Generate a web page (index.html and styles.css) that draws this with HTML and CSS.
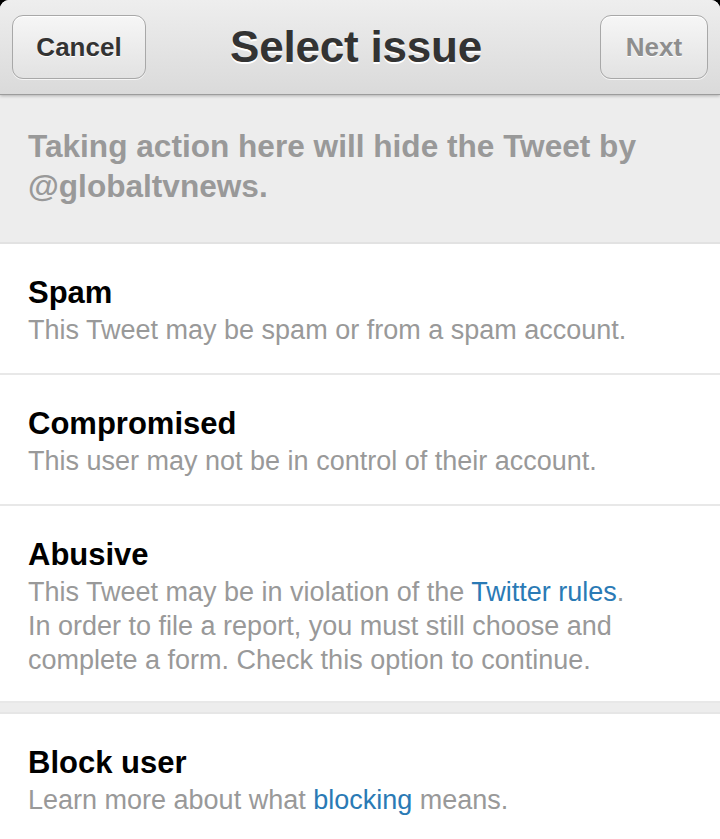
FILE: index.html
```html
<!DOCTYPE html>
<html>
<head>
<meta charset="utf-8">
<link rel="stylesheet" href="styles.css">
</head>
<body>
<div class="screen">
  <header class="navbar">
    <div class="nav-left"><button class="btn btn-cancel">Cancel</button></div>
    <h1 class="nav-title">Select issue</h1>
    <div class="nav-right"><button class="btn btn-next">Next</button></div>
  </header>
  <div class="notice">Taking action here will hide the Tweet by @globaltvnews.</div>
  <ul class="options">
    <li class="option">
      <div class="opt-title">Spam</div>
      <div class="opt-desc">This Tweet may be spam or from a spam account.</div>
    </li>
    <li class="option">
      <div class="opt-title">Compromised</div>
      <div class="opt-desc">This user may not be in control of their account.</div>
    </li>
    <li class="option option-tall">
      <div class="opt-title">Abusive</div>
      <div class="opt-desc">This Tweet may be in violation of the <a class="link">Twitter rules</a>.<br>In order to file a report, you must still choose and<br>complete a form. Check this option to continue.</div>
    </li>
  </ul>
  <div class="gap"></div>
  <ul class="options">
    <li class="option">
      <div class="opt-title">Block user</div>
      <div class="opt-desc">Learn more about what <a class="link">blocking</a> means.</div>
    </li>
  </ul>
</div>
</body>
</html>
```

FILE: styles.css
```css
html, body {
  margin: 0;
  padding: 0;
  background: #000;
}
body {
  font-family: "Liberation Sans", Arial, sans-serif;
  width: 720px;
  height: 839px;
  overflow: hidden;
}
.screen {
  background: #fff;
  height: 839px;
  border-radius: 9px 9px 0 0;
  overflow: hidden;
}
.navbar {
  display: grid;
  grid-template-columns: 1fr auto 1fr;
  align-items: center;
  height: 95px;
  box-sizing: border-box;
  padding: 0 12px;
  background: linear-gradient(#eeeeee, #dadada);
  border-bottom: 1px solid #9c9c9c;
  box-shadow: 0 1px 3px rgba(0,0,0,0.25);
  position: relative;
  z-index: 1;
}
.nav-left { display: flex; justify-content: flex-start; }
.nav-right { display: flex; justify-content: flex-end; }
.nav-title {
  margin: 0 0 0 -8px;
  font-size: 44px;
  font-weight: bold;
  color: #333;
  text-shadow: 0 2px 0 #fff;
  letter-spacing: -0.2px;
}
.btn {
  font-family: "Liberation Sans", Arial, sans-serif;
  font-weight: bold;
  font-size: 26px;
  height: 64px;
  border: 1px solid #a8a8a8;
  border-radius: 11px;
  background: linear-gradient(#f6f6f6, #e2e2e2);
  box-shadow: inset 0 1px 0 #fff, 0 1px 0 rgba(255,255,255,0.7);
  text-shadow: 0 1px 0 #fff;
  padding: 0;
  margin-top: 0;
}
.btn-cancel {
  width: 134px;
  color: #333;
}
.btn-next {
  width: 108px;
  color: #8e8e8e;
}
.notice {
  background: #ededed;
  color: #999;
  font-weight: bold;
  font-size: 31.6px;
  line-height: 40px;
  padding: 31px 60px 36px 28px;
  border-bottom: 2px solid #e2e2e2;
}
.options {
  list-style: none;
  margin: 0;
  padding: 0;
}
.option {
  padding: 31px 28px 26px;
  border-bottom: 2px solid #e8e8e8;
}
.option-tall {
  padding-bottom: 24px;
}
.options:last-child .option:last-child {
  border-bottom: none;
}
.opt-title {
  font-size: 31px;
  font-weight: bold;
  line-height: 36px;
  color: #000;
}
.opt-desc {
  margin-top: 2px;
  font-size: 27px;
  line-height: 34px;
  color: #999;
}
.link {
  color: #2a7ab5;
}
.gap {
  height: 9px;
  background: #ededed;
  border-bottom: 2px solid #e6e6e6;
}
```
